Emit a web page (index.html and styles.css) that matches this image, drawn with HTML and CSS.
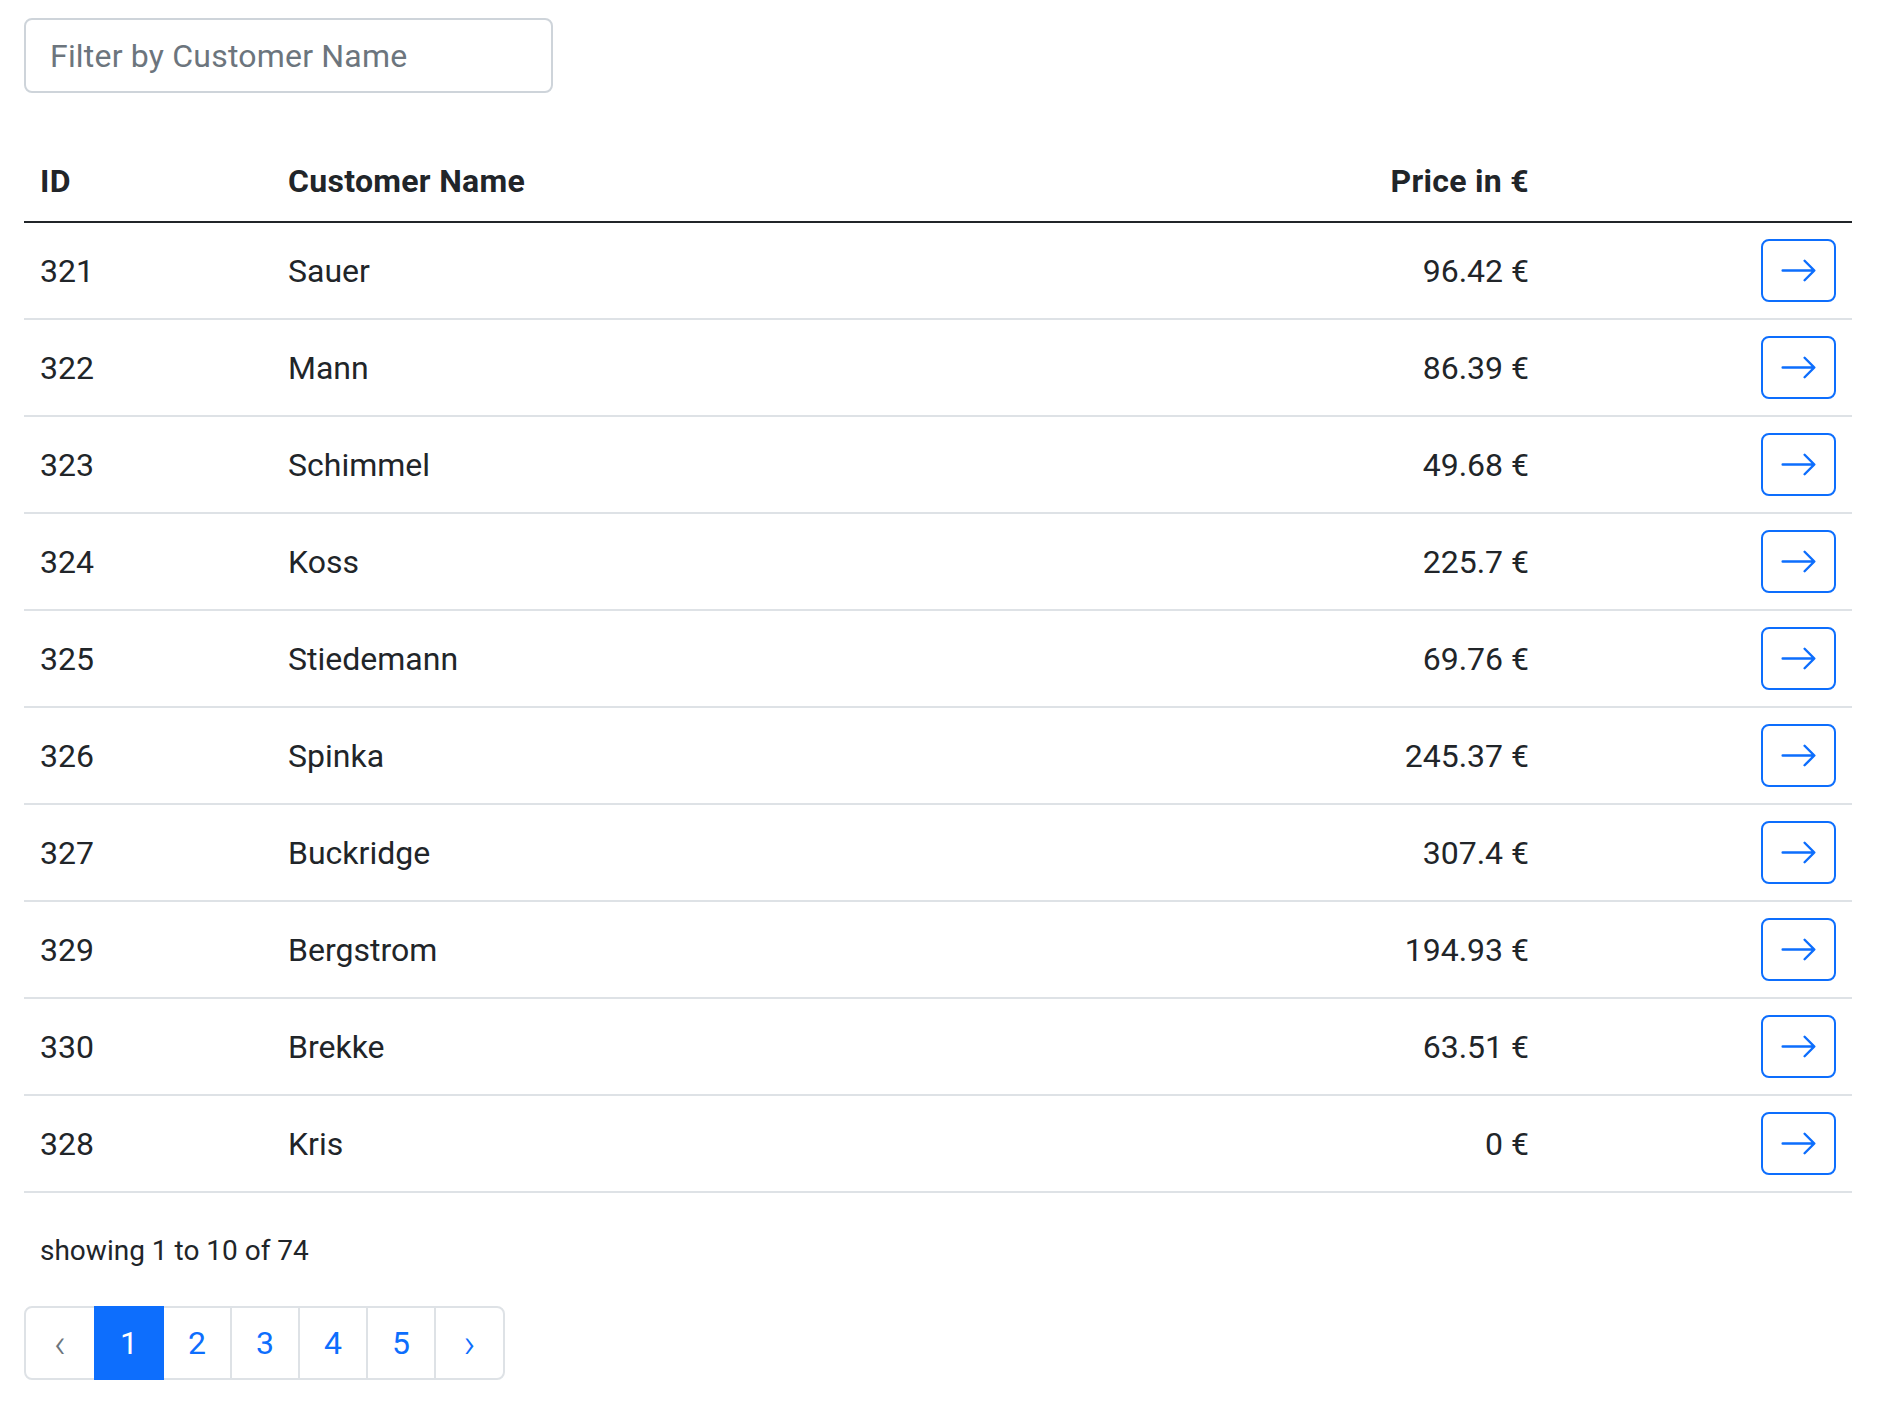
FILE: index.html
```html
<!DOCTYPE html>
<html lang="en">
<head>
<meta charset="utf-8">
<title>Orders</title>
<link rel="stylesheet" href="styles.css">
</head>
<body>
<div class="page">
  <input class="filter" type="text" placeholder="Filter by Customer Name">

  <table class="orders">
    <colgroup>
      <col class="c-id">
      <col class="c-name">
      <col class="c-price">
      <col class="c-action">
    </colgroup>
    <thead>
      <tr>
        <th>ID</th>
        <th>Customer Name</th>
        <th class="num">Price in €</th>
        <th></th>
      </tr>
    </thead>
    <tbody>
      <tr><td>321</td><td>Sauer</td><td class="num">96.42 €</td><td class="act"><button class="go" type="button"><svg viewBox="0 0 16 16" width="39" height="39"><path fill-rule="evenodd" d="M1 8a.5.5 0 0 1 .5-.5h11.793l-3.147-3.146a.5.5 0 0 1 .708-.708l4 4a.5.5 0 0 1 0 .708l-4 4a.5.5 0 0 1-.708-.708L13.293 8.5H1.5A.5.5 0 0 1 1 8z"/></svg></button></td></tr>
      <tr><td>322</td><td>Mann</td><td class="num">86.39 €</td><td class="act"><button class="go" type="button"><svg viewBox="0 0 16 16" width="39" height="39"><path fill-rule="evenodd" d="M1 8a.5.5 0 0 1 .5-.5h11.793l-3.147-3.146a.5.5 0 0 1 .708-.708l4 4a.5.5 0 0 1 0 .708l-4 4a.5.5 0 0 1-.708-.708L13.293 8.5H1.5A.5.5 0 0 1 1 8z"/></svg></button></td></tr>
      <tr><td>323</td><td>Schimmel</td><td class="num">49.68 €</td><td class="act"><button class="go" type="button"><svg viewBox="0 0 16 16" width="39" height="39"><path fill-rule="evenodd" d="M1 8a.5.5 0 0 1 .5-.5h11.793l-3.147-3.146a.5.5 0 0 1 .708-.708l4 4a.5.5 0 0 1 0 .708l-4 4a.5.5 0 0 1-.708-.708L13.293 8.5H1.5A.5.5 0 0 1 1 8z"/></svg></button></td></tr>
      <tr><td>324</td><td>Koss</td><td class="num">225.7 €</td><td class="act"><button class="go" type="button"><svg viewBox="0 0 16 16" width="39" height="39"><path fill-rule="evenodd" d="M1 8a.5.5 0 0 1 .5-.5h11.793l-3.147-3.146a.5.5 0 0 1 .708-.708l4 4a.5.5 0 0 1 0 .708l-4 4a.5.5 0 0 1-.708-.708L13.293 8.5H1.5A.5.5 0 0 1 1 8z"/></svg></button></td></tr>
      <tr><td>325</td><td>Stiedemann</td><td class="num">69.76 €</td><td class="act"><button class="go" type="button"><svg viewBox="0 0 16 16" width="39" height="39"><path fill-rule="evenodd" d="M1 8a.5.5 0 0 1 .5-.5h11.793l-3.147-3.146a.5.5 0 0 1 .708-.708l4 4a.5.5 0 0 1 0 .708l-4 4a.5.5 0 0 1-.708-.708L13.293 8.5H1.5A.5.5 0 0 1 1 8z"/></svg></button></td></tr>
      <tr><td>326</td><td>Spinka</td><td class="num">245.37 €</td><td class="act"><button class="go" type="button"><svg viewBox="0 0 16 16" width="39" height="39"><path fill-rule="evenodd" d="M1 8a.5.5 0 0 1 .5-.5h11.793l-3.147-3.146a.5.5 0 0 1 .708-.708l4 4a.5.5 0 0 1 0 .708l-4 4a.5.5 0 0 1-.708-.708L13.293 8.5H1.5A.5.5 0 0 1 1 8z"/></svg></button></td></tr>
      <tr><td>327</td><td>Buckridge</td><td class="num">307.4 €</td><td class="act"><button class="go" type="button"><svg viewBox="0 0 16 16" width="39" height="39"><path fill-rule="evenodd" d="M1 8a.5.5 0 0 1 .5-.5h11.793l-3.147-3.146a.5.5 0 0 1 .708-.708l4 4a.5.5 0 0 1 0 .708l-4 4a.5.5 0 0 1-.708-.708L13.293 8.5H1.5A.5.5 0 0 1 1 8z"/></svg></button></td></tr>
      <tr><td>329</td><td>Bergstrom</td><td class="num">194.93 €</td><td class="act"><button class="go" type="button"><svg viewBox="0 0 16 16" width="39" height="39"><path fill-rule="evenodd" d="M1 8a.5.5 0 0 1 .5-.5h11.793l-3.147-3.146a.5.5 0 0 1 .708-.708l4 4a.5.5 0 0 1 0 .708l-4 4a.5.5 0 0 1-.708-.708L13.293 8.5H1.5A.5.5 0 0 1 1 8z"/></svg></button></td></tr>
      <tr><td>330</td><td>Brekke</td><td class="num">63.51 €</td><td class="act"><button class="go" type="button"><svg viewBox="0 0 16 16" width="39" height="39"><path fill-rule="evenodd" d="M1 8a.5.5 0 0 1 .5-.5h11.793l-3.147-3.146a.5.5 0 0 1 .708-.708l4 4a.5.5 0 0 1 0 .708l-4 4a.5.5 0 0 1-.708-.708L13.293 8.5H1.5A.5.5 0 0 1 1 8z"/></svg></button></td></tr>
      <tr><td>328</td><td>Kris</td><td class="num">0 €</td><td class="act"><button class="go" type="button"><svg viewBox="0 0 16 16" width="39" height="39"><path fill-rule="evenodd" d="M1 8a.5.5 0 0 1 .5-.5h11.793l-3.147-3.146a.5.5 0 0 1 .708-.708l4 4a.5.5 0 0 1 0 .708l-4 4a.5.5 0 0 1-.708-.708L13.293 8.5H1.5A.5.5 0 0 1 1 8z"/></svg></button></td></tr>
    </tbody>
  </table>

  <p class="summary">showing 1 to 10 of 74</p>

  <ul class="pager">
    <li class="pg arrow disabled"><span class="pg-link">‹</span></li>
    <li class="pg active"><span class="pg-link">1</span></li>
    <li class="pg"><span class="pg-link">2</span></li>
    <li class="pg"><span class="pg-link">3</span></li>
    <li class="pg"><span class="pg-link">4</span></li>
    <li class="pg"><span class="pg-link">5</span></li>
    <li class="pg arrow"><span class="pg-link">›</span></li>
  </ul>
</div>
</body>
</html>
```

FILE: styles.css
```css
* { box-sizing: border-box; }

html, body {
  margin: 0;
  background: #ffffff;
}

body {
  font-family: Roboto, "Liberation Sans", sans-serif;
  font-size: 32px;
  line-height: 48px;
  color: #212529;
}

.page {
  padding: 18px 40px 0 24px;
}

.filter {
  display: block;
  width: 529px;
  height: 75px;
  margin: 0 0 48px 0;
  padding: 0 24px;
  border: 2px solid #ced4da;
  border-radius: 8px;
  font-family: inherit;
  font-size: 32px;
  letter-spacing: 0.2px;
  color: #212529;
  background: #fff;
  outline: none;
}

.filter::placeholder {
  color: #6c757d;
}

.orders {
  width: 100%;
  border-collapse: collapse;
  table-layout: fixed;
}

.c-id { width: 248px; }
.c-price { width: 400px; }
.c-action { width: 307px; }

.orders th {
  font-weight: 700;
  text-align: left;
  padding: 16px;
  border-bottom: 2px solid #212529;
  vertical-align: bottom;
  letter-spacing: 0.3px;
}

.orders td {
  padding: 16px;
  border-bottom: 2px solid #dee2e6;
  vertical-align: middle;
}

.orders .num { text-align: right; }
.orders .act { text-align: right; }

.go {
  display: inline-flex;
  align-items: center;
  justify-content: center;
  width: 75px;
  height: 63px;
  padding: 0;
  border: 2px solid #0d6efd;
  border-radius: 8px;
  background: #fff;
  color: #0d6efd;
  vertical-align: middle;
}

.go svg { fill: currentColor; display: block; }

.summary {
  margin: 37px 0 34px 0;
  padding-left: 16px;
  font-size: 28px;
  line-height: 42px;
}

.pager {
  display: flex;
  list-style: none;
  margin: 0;
  padding: 0;
}

.pg {
  position: relative;
  width: 70px;
  height: 74px;
  margin-left: -2px;
  border: 2px solid #dee2e6;
  color: #0d6efd;
  background: #fff;
  display: flex;
  align-items: center;
  justify-content: center;
}

.pg:first-child {
  margin-left: 0;
  width: 72px;
  border-radius: 8px 0 0 8px;
}

.pg:last-child {
  width: 71px;
  border-radius: 0 8px 8px 0;
}

.pg.active {
  z-index: 1;
  background: #0d6efd;
  border-color: #0d6efd;
  color: #fff;
}

.pg.disabled { color: #6c757d; }

.pg-link { display: block; }

.pg.arrow .pg-link {
  font-size: 40px;
  font-weight: 300;
  line-height: 40px;
  padding-top: 2px;
}
```
